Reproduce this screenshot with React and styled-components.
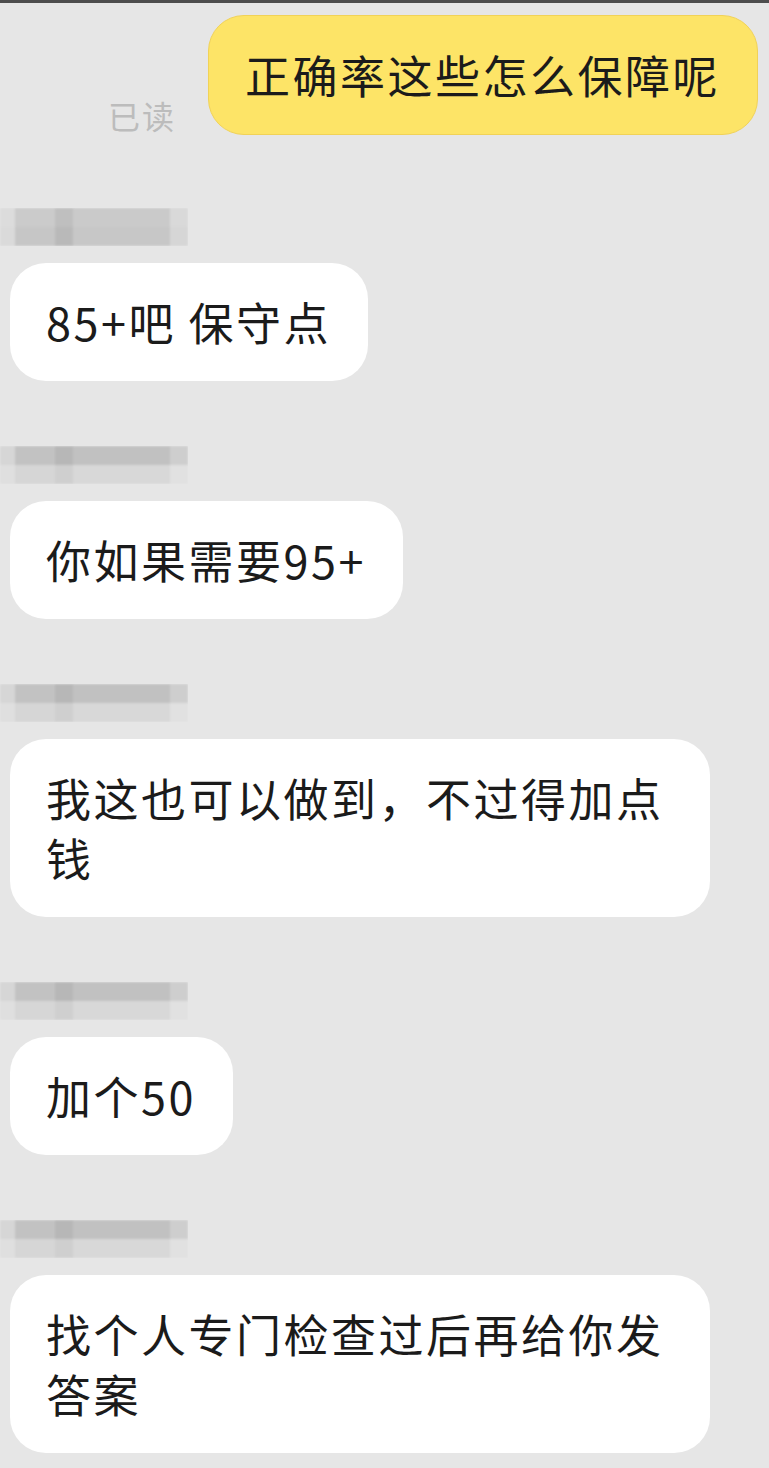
import styled, { createGlobalStyle } from "styled-components";

const GlobalStyle = createGlobalStyle`
  html, body {
    margin: 0;
    padding: 0;
    background: #e6e6e6;
  }
  * {
    box-sizing: border-box;
  }
`;

const FONT = `"Noto Sans CJK SC", "Noto Sans", sans-serif`;

const messages = [
  { text: "85+吧 保守点" },
  { text: "你如果需要95+" },
  { text: "我这也可以做到，不过得加点钱" },
  { text: "加个50" },
  { text: "找个人专门检查过后再给你发答案" },
];

// greys of the pixelated name, top row then bottom row
const mosaics = [
  {
    top: ["#dcdcdc", "#cbcbcb", "#bfbfbf", "#cacaca", "#d9d9d9"],
    bottom: ["#dadada", "#c6c6c6", "#b9b9b9", "#c7c7c7", "#d6d6d6"],
  },
  {
    top: ["#d6d6d6", "#c2c2c2", "#b7b7b7", "#c1c1c1", "#cecece"],
    bottom: ["#dfdfdf", "#d6d6d6", "#cfcfcf", "#d8d8d8", "#e1e1e1"],
  },
];

const cols = [
  [0, 15],
  [15, 40],
  [55, 18],
  [73, 97],
  [170, 18],
];

const Mosaic = ({ variant }) => {
  const m = mosaics[variant];
  return (
    <svg width="188" height="38" viewBox="0 0 188 38">
      <defs>
        <filter id={`soft${variant}`} x="-5%" y="-10%" width="110%" height="120%">
          <feGaussianBlur stdDeviation="0.8" />
        </filter>
      </defs>
      <g filter={`url(#soft${variant})`}>
        {cols.map(([x, w], i) => (
          <rect key={`t${i}`} x={x} y={0} width={w} height={19} fill={m.top[i]} />
        ))}
        {cols.map(([x, w], i) => (
          <rect key={`b${i}`} x={x} y={19} width={w} height={19} fill={m.bottom[i]} />
        ))}
      </g>
    </svg>
  );
};

const Page = styled.div`
  min-height: 1468px;
  background: #e6e6e6;
  border-top: 3px solid #4d4d4d;
  padding: 12px 11px 20px 10px;
  font-family: ${FONT};
`;

const OutRow = styled.div`
  display: flex;
  justify-content: flex-end;
  align-items: flex-end;
  gap: 32px;
`;

const ReadMark = styled.span`
  font-size: 32px;
  line-height: 40px;
  color: #bcbcbc;
  letter-spacing: 2px;
`;

const Bubble = styled.div`
  max-width: 700px;
  padding: 29px 37px 29px 36px;
  border-radius: 36px;
  background: ${(p) => (p.$mine ? "#fde467" : "#ffffff")};
  border: ${(p) => (p.$mine ? "1px solid #f1d257" : "none")};
  color: #1b1b1b;
  font-size: 45px;
  line-height: 60px;
  letter-spacing: 2.5px;
`;

const Group = styled.div`
  display: flex;
  flex-direction: column;
  align-items: flex-start;
  margin-top: ${(p) => (p.$first ? "73px" : "65px")};
`;

const Name = styled.div`
  height: 38px;
  margin-left: -10px;
  margin-bottom: 17px;
  display: flex;
`;

const App = () => {
  return (
    <>
      <GlobalStyle />
      <Page>
        <OutRow>
          <ReadMark>已读</ReadMark>
          <Bubble $mine>正确率这些怎么保障呢</Bubble>
        </OutRow>
        {messages.map((m, i) => (
          <Group key={i} $first={i === 0}>
            <Name>
              <Mosaic variant={i === 0 ? 0 : 1} />
            </Name>
            <Bubble>{m.text}</Bubble>
          </Group>
        ))}
      </Page>
    </>
  );
};

export default App;
